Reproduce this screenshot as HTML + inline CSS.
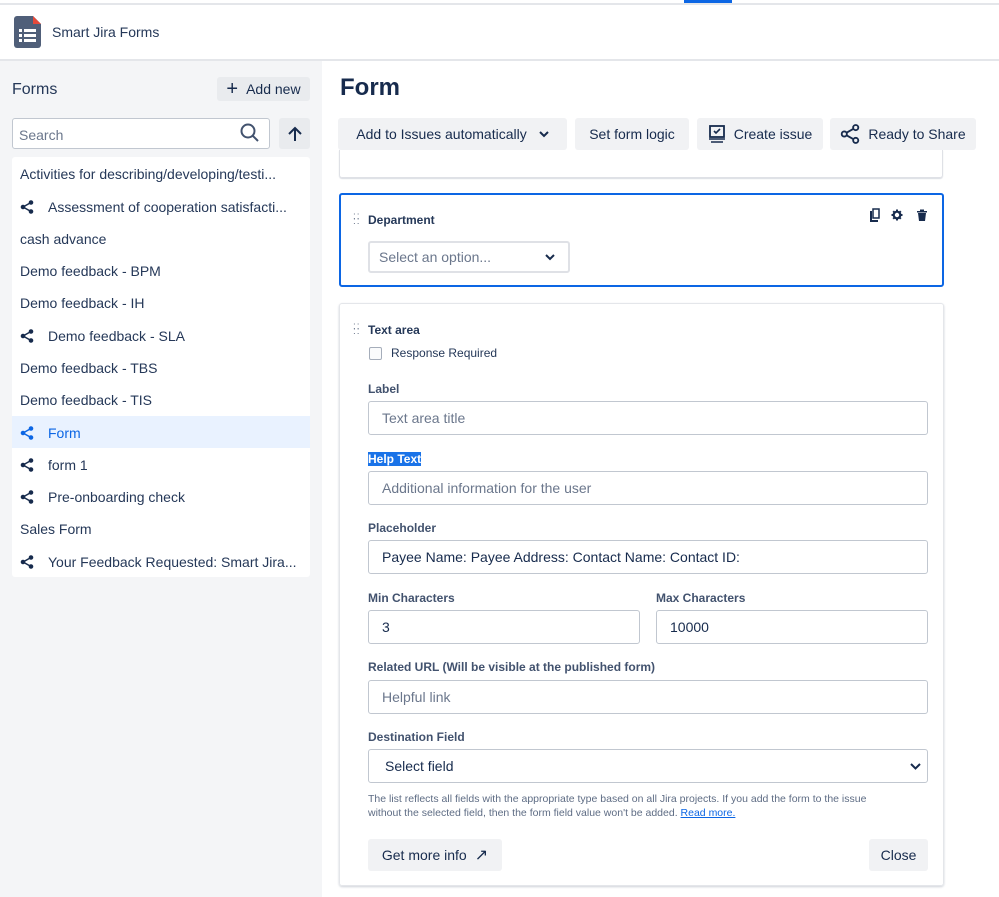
<!DOCTYPE html>
<html><head><style>
*{box-sizing:border-box;margin:0;padding:0}
body{width:999px;height:897px;overflow:hidden;font-family:"Liberation Sans",Arial,sans-serif;color:#172b4d;background:#fff;position:relative}
.a{position:absolute}
.btn{position:absolute;background:#f1f2f4;border-radius:3px;font-size:14px;color:#172b4d;display:flex;align-items:center;justify-content:center;gap:8px}
.item{position:absolute;left:12px;width:298px;height:32px;font-size:14px;color:#253858;display:flex;align-items:center;padding-left:8px}
.item svg{margin-right:14px}
.lbl{position:absolute;font-size:12px;font-weight:bold;color:#42526e}
.inp{position:absolute;border:1px solid #c1c7d0;border-radius:3px;height:34px;font-size:14px;color:#6b778c;display:flex;align-items:center;padding-left:13px;background:#fff}
</style></head><body>
<div class="a" style="left:0;top:3px;width:999px;height:2px;background:#e4e6ea"></div>
<div class="a" style="left:684px;top:0;width:48px;height:3px;background:#0c66e4"></div>
<svg class="a" style="left:14px;top:16px" width="27" height="32" viewBox="0 0 27 32"><path d="M3 0h16l8 8v21a3 3 0 0 1-3 3H3a3 3 0 0 1-3-3V3a3 3 0 0 1 3-3z" fill="#505f79"/><path d="M19 0l8 8h-8z" fill="#e5493a"/><g fill="#fff"><rect x="5" y="13" width="3" height="3"/><rect x="10" y="13" width="12" height="3"/><rect x="5" y="18" width="3" height="3"/><rect x="10" y="18" width="12" height="3"/><rect x="5" y="23" width="3" height="3"/><rect x="10" y="23" width="12" height="3"/></g></svg>
<div class="a" style="left:52px;top:24px;font-size:14px;color:#253858">Smart Jira Forms</div>
<div class="a" style="left:0;top:59px;width:999px;height:2px;background:#e4e6ea"></div>
<div class="a" style="left:0;top:61px;width:322px;height:836px;background:#f4f5f7"></div>
<div class="a" style="left:12px;top:81px;font-size:16px;color:#253858">Forms</div>
<div class="btn" style="left:217px;top:77px;width:93px;height:24px;font-size:14px;background:#e9ebee"><span style="font-size:20px;line-height:1">+</span>Add new</div>
<div class="a" style="left:12px;top:118px;width:258px;height:31px;border:1px solid #c1c7d0;border-radius:3px;background:#fff;font-size:14px;color:#6b778c;padding:8px 6px">Search</div>
<svg class="a" style="left:240px;top:123px" width="20" height="20" viewBox="0 0 20 20"><circle cx="8" cy="8" r="6.5" fill="none" stroke="#42526e" stroke-width="2"/><path d="M13 13l5 5" stroke="#42526e" stroke-width="2"/></svg>
<div class="btn" style="left:279px;top:118px;width:31px;height:31px;background:#e9ebee"><svg width="14" height="16" viewBox="0 0 14 16"><path d="M7 15V2M1 8l6-6 6 6" fill="none" stroke="#172b4d" stroke-width="2"/></svg></div>
<div class="a" style="left:12px;top:157px;width:298px;height:420px;background:#fff;border-radius:3px"></div>
<div class="a" style="left:12px;top:416px;width:298px;height:32px;background:#e9f2ff"></div>
<svg width="0" height="0" style="position:absolute"><defs><g id="sh"><circle cx="3" cy="7" r="1.8"/><circle cx="11" cy="2.5" r="1.8"/><circle cx="11" cy="11.5" r="1.8"/><path d="M3 7L11 2.5M3 7l8 4.5" stroke-width="1.5"/></g></defs></svg>
<div class="item" style="top:158px">Activities for describing/developing/testi...</div>
<div class="item" style="top:191px"><svg width="14" height="14" fill="#172b4d" stroke="#172b4d"><use href="#sh"/></svg>Assessment of cooperation satisfacti...</div>
<div class="item" style="top:223px">cash advance</div>
<div class="item" style="top:255px">Demo feedback - BPM</div>
<div class="item" style="top:287px">Demo feedback - IH</div>
<div class="item" style="top:320px"><svg width="14" height="14" fill="#172b4d" stroke="#172b4d"><use href="#sh"/></svg>Demo feedback - SLA</div>
<div class="item" style="top:352px">Demo feedback - TBS</div>
<div class="item" style="top:384px">Demo feedback - TIS</div>
<div class="item" style="top:417px;color:#0c66e4"><svg width="14" height="14" fill="#0c66e4" stroke="#0c66e4"><use href="#sh"/></svg>Form</div>
<div class="item" style="top:449px"><svg width="14" height="14" fill="#172b4d" stroke="#172b4d"><use href="#sh"/></svg>form 1</div>
<div class="item" style="top:481px"><svg width="14" height="14" fill="#172b4d" stroke="#172b4d"><use href="#sh"/></svg>Pre-onboarding check</div>
<div class="item" style="top:513px">Sales Form</div>
<div class="item" style="top:546px"><svg width="14" height="14" fill="#172b4d" stroke="#172b4d"><use href="#sh"/></svg>Your Feedback Requested: Smart Jira...</div>

<div class="a" style="left:340px;top:74px;font-size:24px;font-weight:bold">Form</div>
<div class="btn" style="left:338px;top:118px;width:229px;height:32px;gap:12px">Add to Issues automatically <svg width="10" height="7"><path d="M1 1l4 4 4-4" fill="none" stroke="#172b4d" stroke-width="2"/></svg></div>
<div class="btn" style="left:575px;top:118px;width:114px;height:32px">Set form logic</div>
<div class="btn" style="left:697px;top:118px;width:126px;height:32px"><svg width="18" height="18" viewBox="0 0 18 18"><rect x="2" y="1" width="14" height="11" fill="none" stroke="#172b4d" stroke-width="1.8"/><path d="M6 6l2 2 4-4" fill="none" stroke="#172b4d" stroke-width="1.6"/><path d="M1 14h16M3 17h12" stroke="#172b4d" stroke-width="1.5"/></svg>Create issue</div>
<div class="btn" style="left:830px;top:118px;width:146px;height:32px"><svg width="20" height="20" viewBox="0 0 14 14" fill="none" stroke="#172b4d" stroke-width="1.3"><circle cx="3" cy="7" r="1.8"/><circle cx="11" cy="2.5" r="1.8"/><circle cx="11" cy="11.5" r="1.8"/><path d="M4.6 6.1l4.8-2.7M4.6 7.9l4.8 2.7"/></svg>Ready to Share</div>

<div class="a" style="left:339px;top:150px;width:604px;height:28px;border:1px solid #dfe1e6;border-top:none;border-radius:0 0 3px 3px;box-shadow:0 1px 1px rgba(9,30,66,.15)"></div>
<div class="a" style="left:339px;top:193px;width:605px;height:94px;border:2px solid #0c66e4;border-radius:3px"></div>
<div class="a" style="left:353px;top:214px;font-size:10px;color:#6b778c;line-height:5px;letter-spacing:1px">::<br>::</div>
<div class="lbl" style="left:368px;top:213px;color:#253858">Department</div>
<svg class="a" style="left:868px;top:208px" width="62" height="14" viewBox="0 0 62 14" fill="#172b4d"><path d="M2 3h2v9h6v2H2z"/><rect x="5" y="1" width="6" height="9" fill="none" stroke="#172b4d" stroke-width="1.5"/><circle cx="29" cy="7" r="3.3" fill="none" stroke="#172b4d" stroke-width="2.2"/><g stroke="#172b4d" stroke-width="2"><path d="M29 1.5v2M29 10.5v2M23.5 7h2M32.5 7h2M25.2 3.2l1.4 1.4M31.4 9.4l1.4 1.4M25.2 10.8l1.4-1.4M31.4 4.6l1.4-1.4"/></g><path d="M49 3h10v1.5H49zM52 1.5h4V3h-4zM50 5h8l-1 8h-6z"/></svg>
<div class="inp" style="left:368px;top:241px;width:202px;height:32px;border-width:2px;border-color:#dfe1e6;padding-left:9px">Select an option...</div>
<svg class="a" style="left:545px;top:254px" width="10" height="7"><path d="M1 1l4 4 4-4" fill="none" stroke="#172b4d" stroke-width="2"/></svg>

<div class="a" style="left:339px;top:303px;width:605px;height:583px;border:1px solid #e4e6ea;border-radius:3px;box-shadow:0 1px 2px rgba(9,30,66,.2)"></div>
<div class="a" style="left:353px;top:324px;font-size:10px;color:#6b778c;line-height:5px;letter-spacing:1px">::<br>::</div>
<div class="lbl" style="left:368px;top:323px;color:#253858">Text area</div>
<div class="a" style="left:369px;top:347px;width:13px;height:13px;border:1px solid #a5adba;border-radius:2px;background:#fafbfc"></div>
<div class="a" style="left:391px;top:346px;font-size:12px;color:#253858">Response Required</div>
<div class="lbl" style="left:368px;top:382px">Label</div>
<div class="inp" style="left:368px;top:401px;width:560px">Text area title</div>
<div class="lbl" style="left:368px;top:452px;background:#1a73e8;color:#fff">Help Text</div>
<div class="inp" style="left:368px;top:471px;width:560px">Additional information for the user</div>
<div class="lbl" style="left:368px;top:521px">Placeholder</div>
<div class="inp" style="left:368px;top:540px;width:560px;color:#172b4d">Payee Name: Payee Address: Contact Name: Contact ID:</div>
<div class="lbl" style="left:368px;top:591px">Min Characters</div>
<div class="lbl" style="left:656px;top:591px">Max Characters</div>
<div class="inp" style="left:368px;top:610px;width:272px;color:#172b4d">3</div>
<div class="inp" style="left:656px;top:610px;width:272px;color:#172b4d">10000</div>
<div class="lbl" style="left:368px;top:660px">Related URL (Will be visible at the published form)</div>
<div class="inp" style="left:368px;top:680px;width:560px">Helpful link</div>
<div class="lbl" style="left:368px;top:730px">Destination Field</div>
<div class="inp" style="left:368px;top:749px;width:560px;color:#172b4d;padding-left:16px">Select field</div>
<svg class="a" style="left:910px;top:763px" width="11" height="7"><path d="M1 1l4.5 4.5L10 1" fill="none" stroke="#172b4d" stroke-width="2"/></svg>
<div class="a" style="left:368px;top:792px;font-size:10.5px;line-height:14px;color:#5e6c84;width:530px">The list reflects all fields with the appropriate type based on all Jira projects. If you add the form to the issue without the selected field, then the form field value won't be added. <span style="color:#0c66e4;text-decoration:underline">Read more.</span></div>
<div class="btn" style="left:368px;top:839px;width:134px;height:32px">Get more info <span style="font-size:16px">↗</span></div>
<div class="btn" style="left:869px;top:839px;width:59px;height:32px">Close</div>
</body></html>
